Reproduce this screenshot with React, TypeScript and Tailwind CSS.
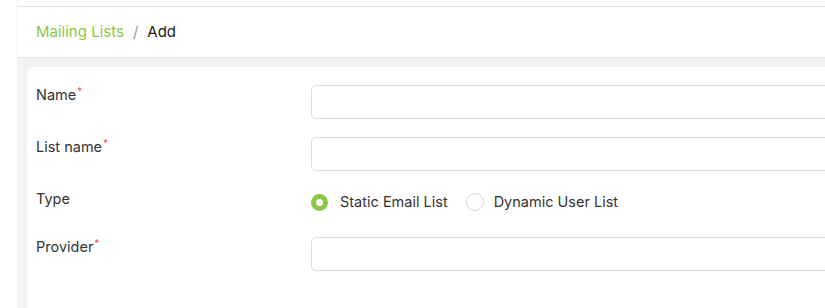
export default function App() {
  const fields = [
    { label: "Name", required: true },
    { label: "List name", required: true },
  ];
  return (
    <div
      className="flex h-[308px] w-full overflow-hidden bg-white text-[#333]"
      style={{ fontFamily: "Inter, 'Noto Sans', sans-serif" }}
    >
      <div className="w-[18px] shrink-0 border-r border-[#f1f2e8] bg-white" />
      <div className="flex min-w-0 flex-1 flex-col">
        <div className="h-[7px] shrink-0 border-b border-[#e2e2e2]" />
        <div className="flex h-[51px] shrink-0 items-center gap-[9px] border-b border-[#e6e6ef] pl-[18px] text-[15px]">
          <span className="text-[#8dc641]">Mailing Lists</span>
          <span className="text-[#9a9a9a]">/</span>
          <span className="text-[#222]">Add</span>
        </div>
        <div className="flex-1 overflow-hidden bg-[#f3f3f3] pl-[9px] pt-[9px]">
          <div className="flex h-full flex-col gap-[18px] overflow-hidden rounded-tl-md bg-white pl-[9px] pt-[18px]">
            {fields.map((f) => (
              <div key={f.label} className="flex items-start">
                <label className="w-[275px] shrink-0 text-[14.5px] leading-[20px]">
                  {f.label}
                  {f.required && (
                    <sup className="ml-[1px] text-[10px] text-[#f0564a]">*</sup>
                  )}
                </label>
                <input className="h-[34px] w-[600px] shrink-0 rounded-[4px] border border-[#dcdcdc] outline-none" />
              </div>
            ))}
            <div className="flex h-[30px] items-start">
              <label className="w-[275px] shrink-0 text-[14.5px] leading-[20px]">
                Type
              </label>
              <div className="flex items-center pt-[3px] text-[14.5px] leading-[20px]">
                <span className="box-border h-[17px] w-[17px] rounded-full border-[5px] border-[#8dc641] bg-white" />
                <span className="ml-[12px]">Static Email List</span>
                <span className="ml-[18px] box-border h-[18px] w-[18px] rounded-full border border-[#d6d6d6] bg-white" />
                <span className="ml-[10px]">Dynamic User List</span>
              </div>
            </div>
            <div className="flex items-start">
              <label className="w-[275px] shrink-0 text-[14.5px] leading-[20px]">
                Provider
                <sup className="ml-[1px] text-[10px] text-[#f0564a]">*</sup>
              </label>
              <input className="h-[34px] w-[600px] shrink-0 rounded-[4px] border border-[#dcdcdc] outline-none" />
            </div>
          </div>
        </div>
      </div>
    </div>
  );
}
